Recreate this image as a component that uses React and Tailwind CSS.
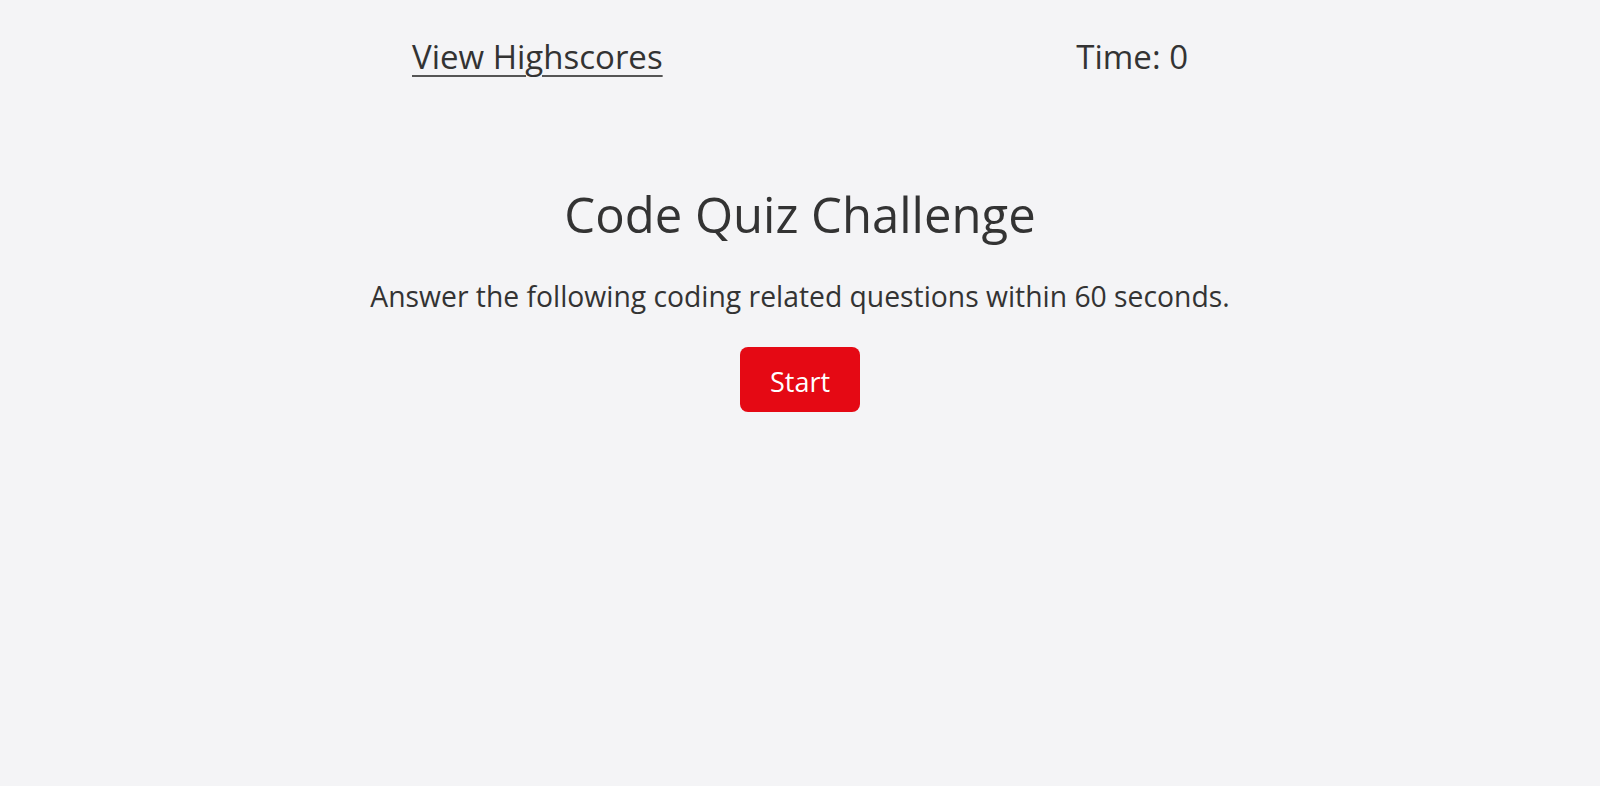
import React from "react";

const App = () => {
  return (
    <div
      className="min-h-screen bg-[#f4f4f6] text-[#333333]"
      style={{ fontFamily: '"Open Sans", "Noto Sans", sans-serif' }}
    >
      {/* Header */}
      <header className="mx-auto flex max-w-[776px] items-center justify-between pt-8">
        <a href="#" className="text-[33px] leading-[1.5] underline underline-offset-[6px] decoration-[2px] decoration-[#555555]">
          View Highscores
        </a>
        <p className="text-[33px] leading-[1.5]">Time: 0</p>
      </header>

      {/* Start screen */}
      <main className="mt-[103px] flex flex-col items-center text-center">
        <h1 className="text-[49px] leading-[1.2]">Code Quiz Challenge</h1>
        <p className="mt-8 text-[28.3px] leading-[1.5]">
          Answer the following coding related questions within 60 seconds.
        </p>
        <button className="mt-[29px] flex h-[65px] w-[120px] items-center justify-center rounded-lg bg-[#e50914] pt-[6px] text-[27px] text-white">
          Start
        </button>
      </main>
    </div>
  );
};

export default App;
